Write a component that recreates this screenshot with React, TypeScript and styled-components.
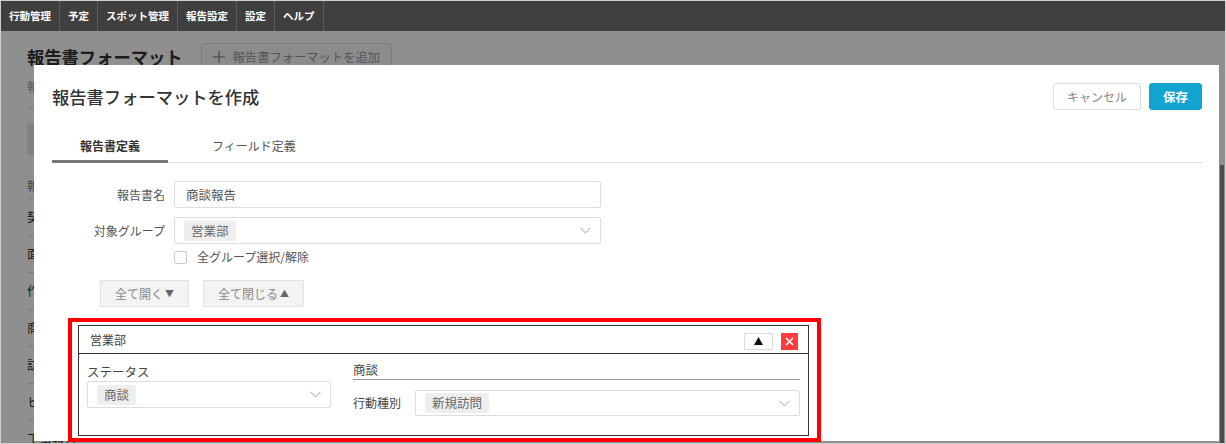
import styled, { createGlobalStyle } from "styled-components";

const GlobalStyle = createGlobalStyle`
  * { box-sizing: border-box; }
  html, body { margin: 0; padding: 0; overflow: hidden; }
  body {
    font-family: "Noto Sans CJK JP", "Noto Sans", sans-serif;
    color: #333;
    background: #fff;
  }
  button { font-family: inherit; }
`;

const NAV = ["行動管理", "予定", "スポット管理", "報告設定", "設定", "ヘルプ"];
const ROWS = ["契約報告", "面談報告", "作業報告", "商談報告", "訪問報告", "ヒアリング報告", "工事報告"];

const Screen = styled.div`
  position: relative;
  width: 1226px;
  height: 444px;
  overflow: hidden;
  border: 1px solid #cfcfcf;
  background: #fff;
`;

const NavBar = styled.nav`
  display: flex;
  height: 30px;
  background: #3f3f3f;
`;

const NavItem = styled.div`
  padding: 0 8px;
  border-right: 1px solid #5c5c5c;
  color: #fff;
  font-size: 10.5px;
  font-weight: 700;
  line-height: 30px;
  white-space: nowrap;
`;

const Page = styled.main`
  padding: 0 26px;
`;

const PageHeader = styled.div`
  display: flex;
  align-items: center;
  gap: 18px;
  height: 27px;
  margin-top: 12px;
`;

const PageTitle = styled.h1`
  margin: 0;
  font-size: 17.3px;
  font-weight: 700;
  line-height: 24px;
  color: #333;
`;

const AddButton = styled.button`
  display: flex;
  align-items: center;
  gap: 8px;
  height: 27px;
  padding: 0 11px;
  border: 1px solid #ddd;
  border-radius: 3px;
  background: #fafafa;
  color: #999;
  font-size: 12.3px;
`;

const Description = styled.p`
  margin: 9px 0 0;
  font-size: 12px;
  line-height: 16px;
  color: #999;
`;

const Divider = styled.hr`
  margin: 13px 0 0;
  border: 0;
  border-top: 1px solid #ddd;
`;

const SearchBox = styled.div`
  margin-top: 14px;
  height: 32px;
  background: #e6e6e6;
  border-radius: 3px;
`;

const TableHead = styled.div`
  margin-top: 21px;
  height: 23px;
  border-bottom: 1px solid #ddd;
  font-size: 12px;
  line-height: 20px;
  color: #777;
`;

const TableRow = styled.div`
  height: 37px;
  border-bottom: 1px solid #ddd;
  font-size: 12.5px;
  line-height: 36px;
  color: #333;
`;

const ScrollTrack = styled.div`
  position: absolute;
  right: 1px;
  top: 164px;
  bottom: 0;
  width: 4px;
  background: #888;
`;

const Overlay = styled.div`
  position: absolute;
  top: 30px;
  left: 0;
  right: 0;
  bottom: 0;
  background: rgba(0, 0, 0, 0.44);
`;

const Modal = styled.section`
  position: absolute;
  left: 33px;
  top: 64px;
  width: 1185px;
  bottom: 2px;
  padding: 18px 17px 0 18px;
  background: #fff;
`;

const ModalHeader = styled.header`
  display: flex;
  align-items: center;
  justify-content: space-between;
  height: 27px;
`;

const ModalTitle = styled.h2`
  margin: 0;
  font-size: 17.3px;
  font-weight: 500;
  line-height: 24px;
  color: #333;
`;

const Actions = styled.div`
  display: flex;
  gap: 8px;
`;

const ActionButton = styled.button<{ $primary?: boolean }>`
  height: 27px;
  padding: 0 13px;
  border: 1px solid ${(p) => (p.$primary ? "#10a4cf" : "#ddd")};
  border-radius: 3px;
  background: ${(p) => (p.$primary ? "#10a4cf" : "#fff")};
  color: ${(p) => (p.$primary ? "#fff" : "#888")};
  font-size: ${(p) => (p.$primary ? "12.5px" : "12px")};
  font-weight: ${(p) => (p.$primary ? 700 : 400)};
  line-height: 25px;
`;

const TabBar = styled.div`
  display: flex;
  gap: 16px;
  margin-top: 19px;
  border-bottom: 1px solid #ddd;
`;

const Tab = styled.div<{ $active?: boolean }>`
  height: 34px;
  margin-bottom: -1px;
  padding: 0 28px;
  border-bottom: 3px solid ${(p) => (p.$active ? "#777" : "transparent")};
  font-size: 12px;
  font-weight: ${(p) => (p.$active ? 700 : 400)};
  line-height: 33px;
  color: ${(p) => (p.$active ? "#333" : "#555")};
`;

const Form = styled.div`
  display: flex;
  flex-direction: column;
  margin-top: 18px;
`;

const FormRow = styled.div`
  display: flex;
  align-items: center;
  gap: 9px;
  & + & {
    margin-top: 9px;
  }
`;

const Label = styled.label`
  width: 113px;
  text-align: right;
  font-size: 12px;
  color: #555;
  white-space: nowrap;
`;

const TextInput = styled.div`
  width: 427px;
  height: 27px;
  padding-left: 11px;
  border: 1px solid #ddd;
  border-radius: 2px;
  font-size: 12.5px;
  line-height: 25px;
  color: #555;
`;

const SelectBox = styled.div<{ $width: number; $height?: number }>`
  display: flex;
  flex-shrink: 0;
  align-items: center;
  width: ${(p) => p.$width}px;
  height: ${(p) => p.$height ?? 27}px;
  padding: 0 9px;
  border: 1px solid #ddd;
  border-radius: 2px;
`;

const Tag = styled.span`
  height: 20px;
  padding: 0 7px;
  border-radius: 2px;
  background: #eee;
  font-size: 12.5px;
  line-height: 20px;
  color: #666;
`;

const Chevron = styled.svg`
  margin-left: auto;
`;

const CheckRow = styled.label`
  display: flex;
  align-items: center;
  gap: 10px;
  height: 16px;
  margin: 5px 0 0 122px;
  font-size: 12px;
  line-height: 16px;
  color: #555;
`;

const Checkbox = styled.span`
  width: 13px;
  height: 13px;
  border: 1px solid #ccc;
  border-radius: 2px;
  background: #fff;
`;

const ToggleRow = styled.div`
  display: flex;
  gap: 14px;
  margin: 15px 0 0 48px;
`;

const ToggleButton = styled.button`
  display: flex;
  align-items: center;
  gap: 2px;
  height: 27px;
  padding: 0 14px;
  border: 1px solid #e2e2e2;
  border-radius: 1px;
  background: #f3f3f3;
  color: #888;
  font-size: 12px;
  line-height: 25px;
`;

const Arrow = styled.span`
  font-size: 9px;
  color: #666;
`;

const Highlight = styled.div`
  align-self: flex-start;
  margin: 11px 0 0 16px;
  padding: 3px 8px 2px 6px;
  border: 4px solid #ff0000;
`;

const Panel = styled.div`
  width: 731px;
  border: 1px solid #333;
`;

const PanelHeader = styled.div`
  display: flex;
  align-items: center;
  gap: 8px;
  height: 28px;
  padding: 3px 10px 0 11px;
  border-bottom: 1px solid #333;
  font-size: 12px;
  color: #444;
`;

const PanelTitle = styled.span`
  margin-right: auto;
  margin-top: -3px;
`;

const CollapseButton = styled.button`
  display: flex;
  align-items: center;
  justify-content: center;
  width: 29px;
  height: 17px;
  padding: 0;
  border: 1px solid #ddd;
  background: #fff;
`;

const RemoveButton = styled.button`
  display: flex;
  align-items: center;
  justify-content: center;
  width: 17px;
  height: 17px;
  padding: 0;
  border: 0;
  background: #ff3b3b;
`;

const PanelBody = styled.div`
  display: flex;
  gap: 22px;
  height: 81px;
  padding: 9px 8px 0 8px;
`;

const Column = styled.div<{ $width: number }>`
  display: flex;
  flex-direction: column;
  width: ${(p) => p.$width}px;
`;

const FieldLabel = styled.div<{ $size?: number }>`
  flex-shrink: 0;
  font-size: ${(p) => p.$size ?? 12.5}px;
  line-height: 18px;
  color: #444;
  white-space: nowrap;
`;

const SectionTitle = styled.div`
  margin-top: -2px;
  height: 19px;
  border-bottom: 1px solid #999;
  font-size: 12.5px;
  line-height: 17px;
  color: #444;
`;

const InlineField = styled.div`
  display: flex;
  align-items: center;
  gap: 14px;
  margin-top: 10px;
`;

function ChevronDown() {
  return (
    <Chevron width="11" height="7" viewBox="0 0 11 7">
      <polyline points="0.5,0.8 5.5,5.8 10.5,0.8" fill="none" stroke="#bbb" strokeWidth="1.1" />
    </Chevron>
  );
}

function Select({ value, width, height }: { value: string; width: number; height?: number }) {
  return (
    <SelectBox $width={width} $height={height}>
      <Tag>{value}</Tag>
      <ChevronDown />
    </SelectBox>
  );
}

export default function App() {
  return (
    <>
      <GlobalStyle />
      <Screen>
        <NavBar>
          {NAV.map((n) => (
            <NavItem key={n}>{n}</NavItem>
          ))}
        </NavBar>

        <Page>
          <PageHeader>
            <PageTitle>報告書フォーマット</PageTitle>
            <AddButton>
              <svg width="12" height="12" viewBox="0 0 12 12">
                <path d="M6 0v12M0 6h12" stroke="#999" strokeWidth="1.6" />
              </svg>
              報告書フォーマットを追加
            </AddButton>
          </PageHeader>
          <Description>報告書</Description>
          <Divider />
          <SearchBox />
          <TableHead>報告書名</TableHead>
          {ROWS.map((r) => (
            <TableRow key={r}>{r}</TableRow>
          ))}
        </Page>
        <ScrollTrack />

        <Overlay />

        <Modal>
          <ModalHeader>
            <ModalTitle>報告書フォーマットを作成</ModalTitle>
            <Actions>
              <ActionButton>キャンセル</ActionButton>
              <ActionButton $primary>保存</ActionButton>
            </Actions>
          </ModalHeader>

          <TabBar>
            <Tab $active>報告書定義</Tab>
            <Tab>フィールド定義</Tab>
          </TabBar>

          <Form>
            <FormRow>
              <Label>報告書名</Label>
              <TextInput>商談報告</TextInput>
            </FormRow>
            <FormRow>
              <Label>対象グループ</Label>
              <Select value="営業部" width={427} />
            </FormRow>
            <CheckRow>
              <Checkbox />
              全グループ選択/解除
            </CheckRow>
            <ToggleRow>
              <ToggleButton>
                全て開く<Arrow>▼</Arrow>
              </ToggleButton>
              <ToggleButton>
                全て閉じる<Arrow>▲</Arrow>
              </ToggleButton>
            </ToggleRow>

            <Highlight>
              <Panel>
                <PanelHeader>
                  <PanelTitle>営業部</PanelTitle>
                  <CollapseButton>
                    <svg width="9" height="8" viewBox="0 0 9 8">
                      <polygon points="4.5,0 9,8 0,8" fill="#111" />
                    </svg>
                  </CollapseButton>
                  <RemoveButton>
                    <svg width="9" height="9" viewBox="0 0 9 9">
                      <path d="M1 1l7 7M8 1l-7 7" stroke="#fff" strokeWidth="1.6" />
                    </svg>
                  </RemoveButton>
                </PanelHeader>
                <PanelBody>
                  <Column $width={244}>
                    <FieldLabel>ステータス</FieldLabel>
                    <Select value="商談" width={244} />
                  </Column>
                  <Column $width={447}>
                    <SectionTitle>商談</SectionTitle>
                    <InlineField>
                      <FieldLabel $size={12}>行動種別</FieldLabel>
                      <Select value="新規訪問" width={385} height={26} />
                    </InlineField>
                  </Column>
                </PanelBody>
              </Panel>
            </Highlight>
          </Form>
        </Modal>
      </Screen>
    </>
  );
}
